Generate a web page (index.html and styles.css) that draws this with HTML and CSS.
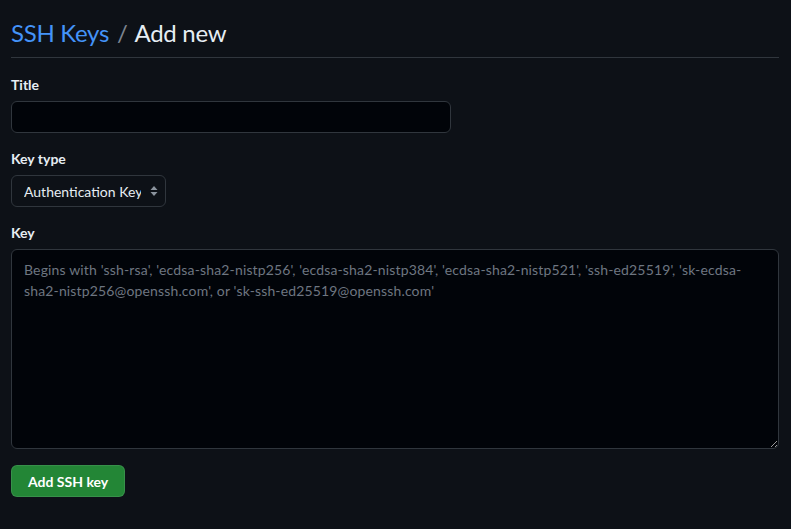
FILE: index.html
```html
<!DOCTYPE html>
<html lang="en">
<head>
<meta charset="utf-8">
<title>Add new SSH Key</title>
<link rel="stylesheet" href="styles.css">
</head>
<body>
<main class="page">
  <div class="subhead">
    <h2 class="subhead-heading"><a class="crumb" href="#">SSH Keys</a> <span class="sep">/</span> Add new</h2>
  </div>
  <form class="form">
    <div class="form-group">
      <label class="label" for="title">Title</label>
      <input class="input input-title" id="title" type="text">
    </div>
    <div class="form-group">
      <label class="label" for="keytype">Key type</label>
      <div class="select-wrap">
        <select class="select" id="keytype">
          <option>Authentication Key</option>
          <option>Signing Key</option>
        </select>
        <svg class="select-arrows" width="8" height="12" viewBox="0 0 8 12" aria-hidden="true"><path d="M4 1 L7.5 5 H0.5 Z M4 11 L0.5 7 H7.5 Z" fill="#8b949e"/></svg>
      </div>
    </div>
    <div class="form-group">
      <label class="label" for="key">Key</label>
      <textarea class="input textarea" id="key" placeholder="Begins with 'ssh-rsa', 'ecdsa-sha2-nistp256', 'ecdsa-sha2-nistp384', 'ecdsa-sha2-nistp521', 'ssh-ed25519', 'sk-ecdsa-sha2-nistp256@openssh.com', or 'sk-ssh-ed25519@openssh.com'"></textarea>
    </div>
    <div class="actions">
      <button class="btn-primary" type="button">Add SSH key</button>
    </div>
  </form>
</main>
</body>
</html>
```
FILE: styles.css
```css
html, body {
  margin: 0;
  padding: 0;
  background: #0d1117;
  color-scheme: dark;
}
body {
  font-family: "Segoe UI", Lato, "Noto Sans", "Liberation Sans", sans-serif;
  font-size: 14px;
  color: #e6edf3;
}
.page {
  width: 768px;
  padding: 0 11px;
}
.subhead {
  border-bottom: 1px solid #30363d;
  padding-top: 17px;
  padding-bottom: 8px;
  margin-bottom: 16px;
}
.subhead-heading {
  margin: 0;
  font-size: 24px;
  font-weight: 400;
  line-height: 32px;
  letter-spacing: -0.3px;
  color: #e6edf3;
}
.crumb {
  color: #4493f8;
  text-decoration: none;
}
.sep {
  color: #7d8590;
  margin: 0 2px;
}
.form-group {
  margin-bottom: 15px;
}
.label {
  display: block;
  font-weight: 700;
  font-size: 14px;
  line-height: 21px;
  margin-bottom: 6px;
}
.input {
  display: block;
  box-sizing: border-box;
  background: #010409;
  border: 1px solid #30363d;
  border-radius: 6px;
  color: #e6edf3;
  font-family: inherit;
  font-size: 14px;
  outline: none;
}
.input-title {
  width: 440px;
  height: 32px;
  padding: 5px 12px;
}
.select-wrap {
  position: relative;
  display: block;
  width: max-content;
}
.select {
  display: block;
  appearance: none;
  -webkit-appearance: none;
  box-sizing: border-box;
  height: 32px;
  width: 155px;
  padding: 0 24px 0 12px;
  background: #0d1117;
  border: 1px solid #30363d;
  border-radius: 6px;
  color: #e6edf3;
  font-family: inherit;
  font-size: 14px;
  outline: none;
}
.select-arrows {
  position: absolute;
  right: 8px;
  top: 10px;
  pointer-events: none;
}
.textarea {
  width: 768px;
  height: 200px;
  padding: 9px 12px;
  line-height: 21px;
  letter-spacing: 0.15px;
  resize: vertical;
}
.textarea::placeholder {
  color: #6e7681;
}
.actions {
  margin-top: 16px;
}
.btn-primary {
  display: block;
  box-sizing: border-box;
  height: 32px;
  padding: 0 16px;
  background: #238636;
  border: 1px solid rgba(240, 246, 252, 0.1);
  border-radius: 6px;
  color: #ffffff;
  font-family: inherit;
  font-size: 14px;
  font-weight: 700;
  cursor: pointer;
}
```
